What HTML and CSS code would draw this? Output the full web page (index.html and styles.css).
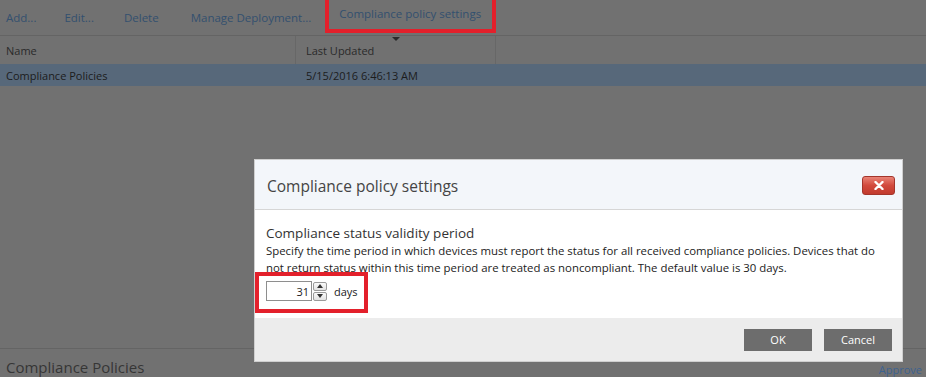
FILE: index.html
```html
<!DOCTYPE html>
<html lang="en">
<head>
  <meta charset="UTF-8" />
  <title>Compliance Policies</title>
  <link rel="stylesheet" href="styles.css">
</head>
<body>

  <div class="toolbar">
    <a href="#" class="tool">Add...</a>
    <a href="#" class="tool">Edit...</a>
    <a href="#" class="tool tool-delete">Delete</a>
    <a href="#" class="tool tool-manage">Manage Deployment...</a>
    <a href="#" class="tool highlight">Compliance policy settings</a>
  </div>

  <div class="list">
    <div class="list-head">
      <div class="col col-name">Name</div>
      <div class="col col-date">Last Updated<span class="sort-arrow"></span></div>
    </div>
    <div class="list-row selected">
      <div class="col col-name">Compliance Policies</div>
      <div class="col col-date">5/15/2016 6:46:13 AM</div>
    </div>
  </div>

  <div class="details">
    <h2 class="details-title">Compliance Policies</h2>
    <a href="#" class="details-link">Approve</a>
  </div>

  <div class="dialog">
    <div class="dialog-head">
      <h1 class="dialog-title">Compliance policy settings</h1>
      <button class="close-btn">
        <svg width="10" height="9" viewBox="0 0 10 9">
          <path d="M1.5 1 L8.5 8 M8.5 1 L1.5 8" stroke="#fff" stroke-width="2.4" stroke-linecap="round"/>
        </svg>
      </button>
    </div>
    <div class="dialog-body">
      <div class="field-label">Compliance status validity period</div>
      <p class="field-help">Specify the time period in which devices must report the status for all received compliance policies. Devices that do not return status within this time period are treated as noncompliant. The default value is 30 days.</p>
      <div class="field-row highlight">
        <input class="num-input" type="text" value="31">
        <div class="spinner">
          <span class="spin-btn">
            <svg width="6" height="4" viewBox="0 0 6 4"><path d="M0 4 L3 0 L6 4 Z" fill="#333"/></svg>
          </span>
          <span class="spin-btn">
            <svg width="6" height="4" viewBox="0 0 6 4"><path d="M0 0 L3 4 L6 0 Z" fill="#333"/></svg>
          </span>
        </div>
        <span class="unit">days</span>
      </div>
    </div>
    <div class="dialog-foot">
      <button class="btn">OK</button>
      <button class="btn">Cancel</button>
    </div>
  </div>

</body>
</html>
```

FILE: styles.css
```css
* {
  margin: 0;
  padding: 0;
  box-sizing: border-box;
}

html, body {
  width: 100%;
  height: 100%;
  overflow: hidden;
}

body {
  background-color: #717171;
  font-family: 'Open Sans', 'Noto Sans', sans-serif;
  font-size: 11px;
  color: #1c1c1c;
  position: relative;
}

a {
  text-decoration: none;
}

.toolbar {
  height: 36px;
  display: flex;
  align-items: center;
  border-bottom: 1px solid #646464;
  padding-left: 6px;
}

.tool {
  color: #33506f;
  font-size: 11.5px;
  margin-right: 28px;
}

.tool-delete {
  margin-left: 2px;
}

.tool-manage {
  margin-left: 4px;
}

.tool.highlight {
  margin-left: -14px;
  padding: 7px 11px 8px 10px;
  border: 4px solid #e3202b;
  border-top: none;
  margin-top: -4px;
}

.list-head, .list-row {
  display: flex;
}

.list-head {
  height: 28px;
  align-items: center;
}

.list-head .col {
  border-right: 1px solid #676767;
  height: 100%;
  display: flex;
  align-items: center;
  color: #2a2a2a;
  position: relative;
}

.col-name {
  width: 296px;
  padding-left: 6px;
}

.col-date {
  width: 200px;
  padding-left: 10px;
}

.sort-arrow {
  position: absolute;
  top: 1px;
  left: 96px;
  border-left: 4px solid transparent;
  border-right: 4px solid transparent;
  border-top: 4px solid #2a2a2a;
}

.list-row {
  height: 22px;
  align-items: center;
}

.list-row.selected {
  background-color: #57687a;
}

.details {
  position: absolute;
  left: 0;
  right: 0;
  top: 348px;
  bottom: 0;
  border-top: 1px solid #646464;
  display: flex;
  justify-content: space-between;
  padding: 7px 0 0 6px;
}

.details-title {
  font-size: 15px;
  font-weight: 400;
  line-height: 22px;
  color: #363636;
}

.details-link {
  color: #3d6290;
  font-size: 11px;
  margin-top: 6px;
  margin-right: 4px;
}

.dialog {
  position: absolute;
  left: 254px;
  top: 159px;
  width: 649px;
  height: 203px;
  background: #fff;
  border: 1px solid #cfcfcf;
  display: flex;
  flex-direction: column;
}

.dialog-head {
  height: 50px;
  background-color: #f3f6fa;
  border-bottom: 1px solid #d6d6d6;
  display: flex;
  align-items: center;
  justify-content: space-between;
  padding: 2px 7px 0 12px;
}

.dialog-title {
  font-size: 15.5px;
  font-weight: 400;
  color: #444;
}

.close-btn {
  width: 33px;
  height: 19px;
  border: 1px solid #a3352b;
  border-radius: 3px;
  background: linear-gradient(#e98376, #d24a3d 50%, #c13a2d);
  display: flex;
  align-items: center;
  justify-content: center;
}

.dialog-body {
  flex: 1;
  padding: 14px 18px 0 11px;
}

.field-label {
  font-size: 13.5px;
  color: #333;
  line-height: 18px;
}

.field-help {
  font-size: 11.4px;
  line-height: 17px;
  color: #222;
}

.field-row {
  display: flex;
  width: fit-content;
  align-items: center;
  margin-left: -11px;
  margin-top: -4px;
  padding: 5px 6px 8px 7px;
  border: 4px solid #e3202b;
}

.num-input {
  width: 46px;
  height: 20px;
  border: 1px solid #8e8e8e;
  font-family: inherit;
  font-size: 11px;
  text-align: right;
  padding-right: 2px;
  color: #222;
}

.spinner {
  display: flex;
  flex-direction: column;
  gap: 1px;
  margin-left: 1px;
}

.spin-btn {
  width: 14px;
  height: 9px;
  border: 1px solid #9a9a9a;
  border-radius: 2px;
  background: linear-gradient(#fafafa, #e2e2e2);
  display: flex;
  align-items: center;
  justify-content: center;
}

.unit {
  margin-left: 7px;
  font-size: 11px;
  color: #222;
}

.dialog-foot {
  height: 43px;
  background-color: #ececec;
  display: flex;
  align-items: center;
  justify-content: flex-end;
  gap: 12px;
  padding-right: 10px;
}

.btn {
  width: 68px;
  height: 22px;
  border: none;
  background-color: #6d6d6d;
  color: #fff;
  font-family: inherit;
  font-size: 11px;
}
```
